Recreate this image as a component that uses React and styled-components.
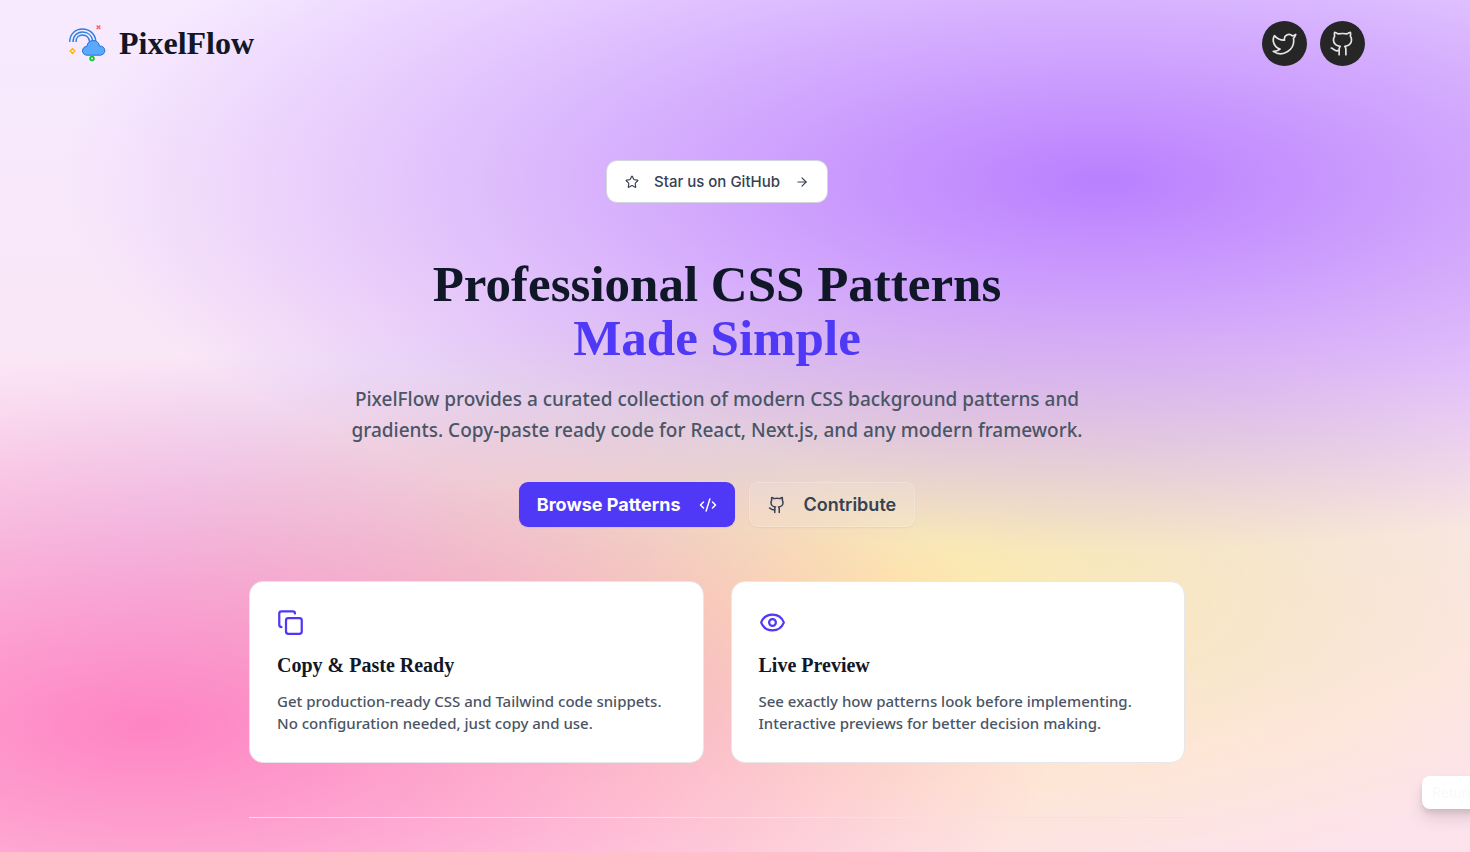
import React from "react";
import styled, { createGlobalStyle } from "styled-components";
import { ArrowRight, CodeXml, Copy, Eye, Github, Star, Twitter } from "lucide-react";

const serif = '"Liberation Serif", serif';
const body = '"Noto Sans", sans-serif';
const grotesk = 'Inter, sans-serif';

const GlobalStyle = createGlobalStyle`
  *, *::before, *::after { box-sizing: border-box; }
  html { scrollbar-width: none; }
  body { margin: 0; color: #101828; font-family: ${body}; }
  h1, h2, p { margin: 0; }
`;

const Page = styled.div`
  min-height: 100vh;
  padding: 0 36px 88px 0;
  overflow-x: clip;
  background:
    radial-gradient(ellipse 104% 60% at 75% 20%, rgba(175, 109, 255, 0.85), transparent 68%),
    radial-gradient(ellipse 91% 60% at 10% 80%, rgba(255, 100, 180, 0.75), transparent 68%),
    radial-gradient(ellipse 78% 50% at 62% 65%, rgba(255, 235, 170, 0.98), transparent 68%),
    radial-gradient(ellipse 84% 40% at 49% 60%, rgba(120, 190, 255, 0.3), transparent 68%),
    linear-gradient(180deg, #f7eaff 0%, #fde2ea 100%);
`;

const Header = styled.header`
  display: flex;
  align-items: center;
  justify-content: space-between;
  max-width: 1296px;
  height: 86px;
  margin: 0 auto;
`;

const Brand = styled.a`
  display: flex;
  align-items: center;
  gap: 12px;
  color: #101828;
  font: bold 32px/40px ${serif};
  text-decoration: none;
`;

const Socials = styled.nav`
  display: flex;
  gap: 13px;
`;

const SocialLink = styled.a`
  display: grid;
  place-items: center;
  width: 45px;
  height: 45px;
  border-radius: 50%;
  background: #262626;
  color: #e5e5e5;
`;

const Hero = styled.main`
  display: flex;
  flex-direction: column;
  align-items: center;
  max-width: 936px;
  margin: 0 auto;
  padding-top: 74px;
`;

const Badge = styled.a`
  display: flex;
  align-items: center;
  gap: 15px;
  height: 43px;
  padding: 0 18px;
  border: 1px solid #d1d5dc;
  border-radius: 11px;
  background: #fff;
  color: #364153;
  font: 500 15px/22px ${grotesk};
  text-decoration: none;
`;

const Headline = styled.h1`
  margin-top: 54px;
  font: bold 51px/54px ${serif};
  text-align: center;
`;

const Accent = styled.span`
  display: block;
  color: #4f39f6;
`;

const Lead = styled.p`
  max-width: 756px;
  margin-top: 19px;
  color: #4a5565;
  font: 500 19px/31px ${body};
  text-align: center;
`;

const Actions = styled.div`
  display: flex;
  gap: 14px;
  margin-top: 36px;
`;

const Button = styled.button`
  display: flex;
  align-items: center;
  gap: 18px;
  height: 45px;
  padding: 0 18px;
  border: ${(p) => (p.$primary ? "0" : "1px solid rgba(255, 255, 255, 0.2)")};
  border-radius: 9px;
  background: ${(p) => (p.$primary ? "#4f39f6" : "rgba(255, 255, 255, 0.08)")};
  color: ${(p) => (p.$primary ? "#fff" : "#364153")};
  font: ${(p) => (p.$primary ? 700 : 600)} 18px/27px ${grotesk};
  box-shadow: 0 1px 2px rgba(0, 0, 0, 0.06);
  cursor: pointer;
`;

const Features = styled.section`
  display: grid;
  grid-template-columns: 1fr 1fr;
  gap: 27px;
  width: 100%;
  margin-top: 54px;
`;

const Card = styled.article`
  padding: 27px 27px 28px;
  border: 1px solid #e5e7eb;
  border-radius: 14px;
  background: #fff;
  svg { display: block; color: #4f39f6; }
`;

const CardTitle = styled.h2`
  margin-top: 16px;
  font: bold 20px/26px ${serif};
`;

const CardText = styled.p`
  margin-top: 12px;
  color: #4a5565;
  font: 500 15px/22px ${body};
`;

const Divider = styled.hr`
  width: 100%;
  height: 1px;
  margin: 54px 0 0;
  border: 0;
  background: #e5e7eb;
`;

const ReturnButton = styled.button`
  position: fixed;
  right: -72px;
  bottom: 43px;
  width: 120px;
  height: 33px;
  padding: 0 10px;
  border: 0;
  border-radius: 8px;
  background: #fff;
  color: #f8f9fb;
  font: 400 14px/20px ${grotesk};
  text-align: left;
  box-shadow: 0 10px 15px rgba(0, 0, 0, 0.1), 0 4px 6px rgba(0, 0, 0, 0.1);
`;

function Logo() {
  return (
    <svg width="38" height="38" viewBox="1 0 38 38" fill="none" aria-hidden="true">
      <g stroke="#2b7fe0" strokeWidth="1.4">
        <path d="M1.7 18C1.7 10 7.5 5 14.5 5C21.5 5 27.2 10 27.8 17" />
        <path d="M5 18C5 12 9 8 14.5 8C20 8 24 11.500 24.800 17" />
        <path d="M8 18C8 13.500 11 11 14.500 11C18 11 21 13.500 21.700 18" />
      </g>
      <path
        d="M19 31.200C16.500 31.200 14.500 29.300 14.500 26.800C14.500 24.300 16.500 22.300 19 22.300C19.200 18.800 21.900 16.500 25.200 16.500C28.700 16.500 31.200 19 31.400 22.100C34.500 21.700 36.800 23.800 36.800 26.600C36.800 29.300 34.800 31.200 32 31.200Z"
        fill="#5aa9ff"
        stroke="#2473d4"
      />
      <path d="M28.700 1.500L32.300 5M32.300 1.500L28.700 5" stroke="#ff6467" strokeWidth="1.600" />
      <path d="M4.500 24.800L6.800 27.100L4.500 29.400L2.200 27.100Z" stroke="#fcb700" strokeWidth="1.400" />
      <circle cx="24" cy="34.500" r="1.900" stroke="#05c92a" strokeWidth="1.600" />
    </svg>
  );
}

const features = [
  {
    Icon: Copy,
    title: "Copy & Paste Ready",
    text: "Get production-ready CSS and Tailwind code snippets. No configuration needed, just copy and use.",
  },
  {
    Icon: Eye,
    title: "Live Preview",
    text: "See exactly how patterns look before implementing. Interactive previews for better decision making.",
  },
];

export default function App() {
  return (
    <>
      <GlobalStyle />
      <Page>
        <Header>
          <Brand href="#">
            <Logo />
            PixelFlow
          </Brand>
          <Socials>
            <SocialLink href="#" aria-label="Twitter">
              <Twitter size={27} strokeWidth={1.5} />
            </SocialLink>
            <SocialLink href="#" aria-label="GitHub">
              <Github size={27} strokeWidth={1.5} />
            </SocialLink>
          </Socials>
        </Header>
        <Hero>
          <Badge href="#">
            <Star size={14} />
            Star us on GitHub
            <ArrowRight size={14} />
          </Badge>
          <Headline>
            Professional CSS Patterns
            <Accent>Made Simple</Accent>
          </Headline>
          <Lead>
            PixelFlow provides a curated collection of modern CSS background patterns and gradients.
            Copy-paste ready code for React, Next.js, and any modern framework.
          </Lead>
          <Actions>
            <Button $primary>
              Browse Patterns
              <CodeXml size={18} />
            </Button>
            <Button>
              <Github size={18} />
              Contribute
            </Button>
          </Actions>
          <Features>
            {features.map(({ Icon, title, text }) => (
              <Card key={title}>
                <Icon size={27} />
                <CardTitle>{title}</CardTitle>
                <CardText>{text}</CardText>
              </Card>
            ))}
          </Features>
          <Divider />
        </Hero>
        <ReturnButton>Return to top</ReturnButton>
      </Page>
    </>
  );
}
